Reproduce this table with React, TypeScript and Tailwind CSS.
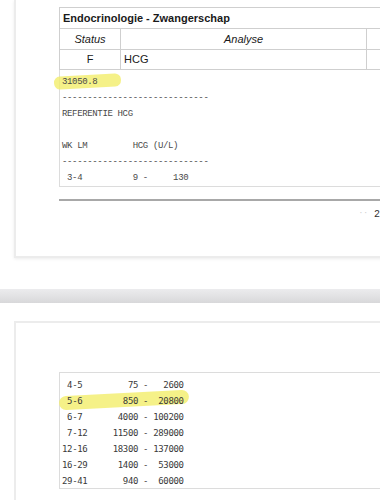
import React from "react";

const page1Lines = [
  "31050.8",
  "-----------------------------",
  "REFERENTIE HCG",
  "",
  "WK LM         HCG (U/L)",
  "-----------------------------",
  " 3-4          9 -     130",
];

const page2Lines = [
  " 4-5         75 -   2600",
  " 5-6        850 -  20800",
  " 6-7       4000 - 100200",
  " 7-12     11500 - 289000",
  "12-16     18300 - 137000",
  "16-29      1400 -  53000",
  "29-41       940 -  60000",
];

export default function App() {
  return (
    <div className="relative w-[380px] h-[500px] overflow-hidden bg-white">
      {/* Page 1 */}
      <div className="relative ml-[14px] h-[258px] w-[400px] bg-white border-l-2 border-b-2 border-[#ececec] shadow-[0_1px_3px_rgba(0,0,0,0.08)]">
        <div className="pl-[43px] pt-[7px]">
          <div className="w-[340px] font-['Liberation_Sans',Arial,sans-serif] text-[#1a1a1a]">
            <div className="h-[22px] border border-[#cfcfcf] flex items-center pl-[3px] text-[11px] font-bold">
              Endocrinologie - Zwangerschap
            </div>
            <div className="flex h-[21px] border-x border-b border-[#cfcfcf] text-[11px] italic">
              <div className="w-[61px] flex items-center justify-center border-r border-[#cfcfcf]">Status</div>
              <div className="w-[246px] flex items-center justify-center border-r border-[#cfcfcf]">Analyse</div>
              <div className="flex-1" />
            </div>
            <div className="flex h-[20px] border-x border-b border-[#cfcfcf] text-[11px]">
              <div className="w-[61px] flex items-center justify-center border-r border-[#cfcfcf]">F</div>
              <div className="w-[246px] flex items-center pl-[3px] border-r border-[#cfcfcf]">HCG</div>
              <div className="flex-1" />
            </div>
            <div className="relative h-[117px] border-x border-b border-[#dcdcdc] pl-[2px] pt-[4px]">
              <div className="absolute left-[-6px] top-[5px] w-[67px] h-[13px] bg-[#f3ee6a] opacity-80 rounded-[6px] -rotate-[3deg]" />
              <div className="relative font-['Liberation_Mono','Courier_New',monospace] text-[9px] tracking-[-0.35px] leading-[16px] text-[#4a4a4a] whitespace-pre">
                {page1Lines.map((l, i) => (
                  <div key={i} className="h-[16px]">{l}</div>
                ))}
              </div>
            </div>
            <div className="mt-[12px] h-[2px] bg-[#a8a8a8]" />
            <div className="flex justify-end pr-[19px] pt-[6px] text-[10px] text-[#333] font-['Liberation_Mono',monospace]">
              <span className="text-[#ccc] mr-[6px] text-[8px]">··</span>
              <span>2</span>
            </div>
          </div>
        </div>
      </div>

      {/* gap band */}
      <div className="mt-[31px] h-[14px] bg-gradient-to-b from-[#ececee] via-[#e2e2e4] to-[#d8d8da]" />

      {/* Page 2 */}
      <div className="mt-[18px] ml-[14px] h-[200px] w-[400px] bg-white border-l-2 border-t-2 border-[#ececec]">
        <div className="pl-[43px] pt-[49px]">
          <div className="relative w-[340px] h-[117px] border border-[#dcdcdc] pl-[2px] pt-[4px]">
            <div className="absolute left-[-1px] top-[20px] w-[130px] h-[14px] bg-[#f3ee6a] opacity-80 rounded-[7px] -rotate-[3deg]" />
            <div className="relative font-['DejaVu_Sans_Mono',monospace] text-[9px] tracking-[-0.35px] leading-[16px] text-[#3a3a3a] whitespace-pre">
              {page2Lines.map((l, i) => (
                <div key={i} className="h-[16px]">{l}</div>
              ))}
            </div>
          </div>
        </div>
      </div>
    </div>
  );
}
